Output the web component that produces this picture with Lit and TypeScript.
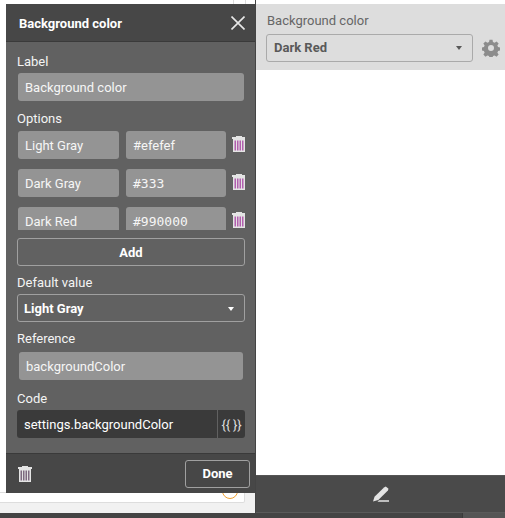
import { LitElement, css, html } from 'lit';
import { customElement } from 'lit/decorators.js';

const trash = html`<svg class="trash" viewBox="0 0 14 16" width="14" height="16">
  <path fill="#e4e4e4" d="M4 0h6v1h4v2H0V1h4zM1 3h12v13H1z" />
  <path class="bars" fill="#b25fae" d="M2.500 4.500h1.500v10H2.500zM5 4.500h1.500v10H5zM7.500 4.500H9v10H7.500zM10 4.500h1.500v10H10z" />
</svg>`;

@customElement('app-root')
export class AppRoot extends LitElement {
  static styles = css`
    :host {
      display: block;
      width: 505px;
      height: 518px;
      background: #fff;
      font-family: Roboto, sans-serif;
      font-size: 13px;
      color: #fff;
      overflow: hidden;
    }
    .page {
      position: relative;
      width: 505px;
      height: 518px;
      overflow: hidden;
    }

    /* sheet behind the dialog */
    .sheet {
      display: flex;
      flex-direction: column;
      height: 513px;
      margin-left: 255px;
      border-left: 1px solid #444;
      padding-top: 4px;
      box-sizing: border-box;
    }
    .preview {
      height: 66px;
      background: #ddd;
      box-sizing: border-box;
      padding: 8px 0 0 10px;
      color: #666;
    }
    .preview-label {
      line-height: 18px;
      padding-left: 1px;
    }
    .preview-row {
      display: flex;
      align-items: center;
      gap: 9px;
      margin-top: 4px;
    }
    .preview-select {
      flex: none;
      width: 207px;
      height: 28px;
      box-sizing: border-box;
      border: 1px solid #aaa;
      border-radius: 3px;
      display: flex;
      align-items: center;
      justify-content: space-between;
      padding: 0 10px 2px 7px;
      font-weight: 700;
      color: #595959;
    }
    .gear {
      flex: none;
    }
    .caret {
      width: 0;
      height: 0;
      margin-top: 2px;
      border-left: 3.5px solid transparent;
      border-right: 3.5px solid transparent;
      border-top: 4px solid currentColor;
    }
    .spacer {
      flex: 1;
      background: #fff;
    }
    .toolbar {
      height: 38px;
      background: #4a4a4a;
      border-top: 1px solid #555;
      border-bottom: 1px solid #5a5a5a;
      box-sizing: border-box;
      display: flex;
      align-items: center;
      justify-content: center;
    }
    .strip {
      position: absolute;
      left: 0;
      right: 0;
      top: 513px;
      height: 5px;
      background: #444;
    }
    .strip i {
      position: absolute;
      left: 462px;
      right: 0;
      top: 0;
      bottom: 0;
      background: #555;
      border-left: 1px solid #3a3a3a;
    }
    .under {
      position: absolute;
      left: 0;
      top: 492px;
      width: 255px;
      height: 21px;
      background: #f1f1f1;
    }
    .under-box {
      position: relative;
      width: 245px;
      height: 11px;
      background: #fff;
      border: 1px solid #ddd;
      border-left: none;
      border-radius: 0 0 2px 0;
      box-sizing: border-box;
      overflow: hidden;
    }
    .under-box i {
      position: absolute;
      left: 222px;
      top: -10px;
      width: 14px;
      height: 14px;
      border: 1px solid #f0a030;
      border-radius: 50%;
    }
    .tab {
      position: absolute;
      left: 233px;
      top: 0;
      width: 11px;
      height: 4px;
      border-left: 1px solid #ddd;
      border-right: 1px solid #ddd;
    }

    /* dialog */
    .dialog {
      position: absolute;
      left: 6px;
      top: 4px;
      width: 249px;
      height: 489px;
      background: #616161;
      display: flex;
      flex-direction: column;
    }
    .head {
      height: 38px;
      flex: none;
      background: #474747;
      border-bottom: 1px solid #3a3a3a;
      box-sizing: border-box;
      display: flex;
      align-items: center;
      justify-content: space-between;
      padding: 0 10px 0 13px;
      font-weight: 700;
    }
    .head span {
      padding-top: 2px;
    }
    .body {
      flex: 1;
      padding: 10px 10px 0 11px;
      min-height: 0;
    }
    .lbl {
      line-height: 20px;
      height: 18px;
      color: #f4f4f4;
    }
    .input {
      height: 28px;
      border-radius: 3px;
      background: #949494;
      color: #f6f6f6;
      line-height: 30px;
      padding: 0 7px;
      box-sizing: border-box;
      white-space: nowrap;
    }
    .mono {
      font-family: 'DejaVu Sans Mono', monospace;
    }
    .field {
      margin: 3px 1px 0;
    }
    .options {
      position: relative;
      height: 100px;
      margin-top: 3px;
      padding: 1px 0 0 1px;
      box-sizing: border-box;
      overflow: hidden;
    }
    .opt {
      display: grid;
      grid-template-columns: 101px 100px 14px;
      column-gap: 7px;
      align-items: center;
      height: 28px;
      margin-bottom: 10px;
    }
    .opt .trash {
      margin: -2px 0 0 -1px;
    }
    .trash {
      display: block;
    }
    .scroll {
      position: absolute;
      right: -10px;
      top: 0;
      width: 7px;
      height: 93px;
      background: #484848;
    }
    .btn {
      height: 28px;
      border: 1px solid #a0a0a0;
      border-radius: 3px;
      box-sizing: border-box;
      display: flex;
      align-items: center;
      justify-content: center;
      font-weight: 700;
    }
    .add {
      margin-top: 8px;
    }
    .select {
      justify-content: space-between;
      padding: 0 10px 0 6px;
      margin-top: 3px;
    }
    .gap7 {
      margin-top: 7px;
    }
    .gap8 {
      margin-top: 8px;
    }
    .gap9 {
      margin-top: 9px;
    }
    .ref {
      margin: 5px 2px 0;
    }
    .code {
      display: flex;
      height: 28px;
      margin-top: 3px;
      background: #3a3a3a;
      border-radius: 3px;
      line-height: 30px;
    }
    .code span:first-child {
      flex: 1;
      padding: 0 7px;
    }
    .code span:last-child {
      width: 27px;
      border-left: 1px solid #616161;
      text-align: center;
      letter-spacing: -0.2px;
      color: #ddd;
    }
    .foot {
      height: 40px;
      flex: none;
      background: #474747;
      border-top: 1px solid #3a3a3a;
      box-sizing: border-box;
      display: flex;
      align-items: center;
      justify-content: space-between;
      padding: 0 5px 0 12px;
    }
    .foot .btn {
      width: 65px;
    }
    .foot .bars {
      fill: #7d6a80;
    }
  `;

  render() {
    return html`
      <div class="page">
        <div class="tab"></div>
        <div class="sheet">
          <div class="preview">
            <div class="preview-label">Background color</div>
            <div class="preview-row">
              <div class="preview-select">Dark Red <span class="caret"></span></div>
              <svg class="gear" viewBox="0 0 24 24" width="18" height="18">
                <path
                  fill="#8c8c8c"
                  fill-rule="evenodd"
                  d="M10 1h4l.6 3 2.200.9 2.600-1.700 2.800 2.800-1.700 2.600.9 2.200 3 .6v4l-3 .6-.9 2.200 1.700 2.600-2.800 2.800-2.600-1.700-2.200.9-.6 3h-4l-.6-3-2.200-.9-2.600 1.700-2.800-2.800 1.700-2.600-.9-2.200-3-.6v-4l3-.6.9-2.200L1.800 6l2.800-2.800 2.600 1.700 2.200-.9zM12 8a4 4 0 100 8 4 4 0 000-8z"
                />
              </svg>
            </div>
          </div>
          <div class="spacer"></div>
          <div class="toolbar">
            <svg viewBox="0 0 18 18" width="18" height="18">
              <path fill="#e4e4e4" d="M1 16.500l1.500-4.800L12 2.500l1.800-1 2.700 2.200-.6 1.800-9.600 9.400z" />
              <path fill="#e4e4e4" d="M7 15.200h10v1.500H5.500z" />
            </svg>
          </div>
        </div>
        <div class="under"><div class="under-box"><i></i></div></div>
        <div class="strip"><i></i></div>

        <div class="dialog">
          <div class="head">
            <span>Background color</span>
            <svg viewBox="0 0 14 14" width="14" height="14">
              <path stroke="#e8e8e8" stroke-width="1.600" d="M.5.5l13 13M13.500.5l-13 13" />
            </svg>
          </div>
          <div class="body">
            <div class="lbl">Label</div>
            <div class="input field">Background color</div>
            <div class="lbl gap8">Options</div>
            <div class="options">
              <div class="opt"><div class="input">Light Gray</div><div class="input">#efefef</div>${trash}</div>
              <div class="opt"><div class="input">Dark Gray</div><div class="input mono">#333</div>${trash}</div>
              <div class="opt"><div class="input">Dark Red</div><div class="input mono">#990000</div>${trash}</div>
              <div class="scroll"></div>
            </div>
            <div class="btn add">Add</div>
            <div class="lbl gap7">Default value</div>
            <div class="btn select">Light Gray <span class="caret"></span></div>
            <div class="lbl gap7">Reference</div>
            <div class="input ref">backgroundColor</div>
            <div class="lbl gap9">Code</div>
            <div class="code"><span>settings.backgroundColor</span><span>{{ }}</span></div>
          </div>
          <div class="foot">${trash}<div class="btn">Done</div></div>
        </div>
      </div>
    `;
  }
}

declare global {
  interface HTMLElementTagNameMap {
    'app-root': AppRoot;
  }
}
